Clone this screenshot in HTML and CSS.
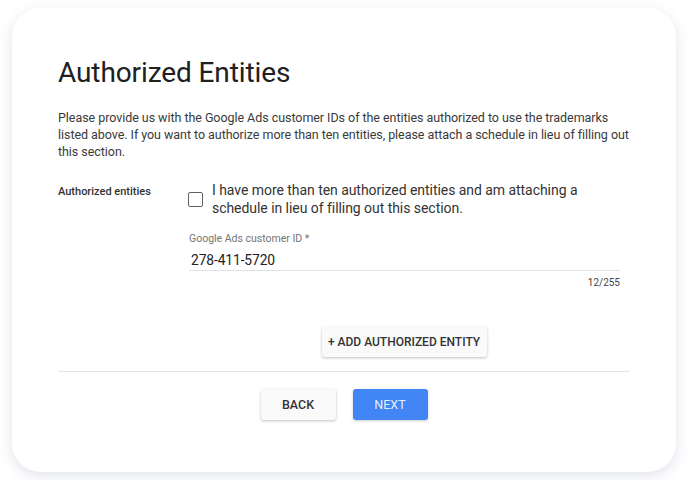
FILE: index.html
```html
<!DOCTYPE html>
<html>
<head>
<meta charset="utf-8">
<link rel="stylesheet" href="styles.css">
</head>
<body>
<div class="card">
  <h1 class="title">Authorized Entities</h1>
  <p class="intro">Please provide us with the Google Ads customer IDs of the entities authorized to use the trademarks listed above. If you want to authorize more than ten entities, please attach a schedule in lieu of filling out this section.</p>
  <div class="row">
    <div class="row-label">Authorized entities</div>
    <div class="row-body">
      <label class="check">
        <span class="box"></span>
        <span class="check-text">I have more than ten authorized entities and am attaching a schedule in lieu of filling out this section.</span>
      </label>
      <div class="field">
        <div class="field-label">Google Ads customer ID *</div>
        <div class="field-value">278-411-5720</div>
        <div class="counter">12/255</div>
      </div>
      <div class="add-wrap">
        <button class="btn add">+ ADD AUTHORIZED ENTITY</button>
      </div>
    </div>
  </div>
  <div class="divider"></div>
  <div class="actions">
    <button class="btn back">BACK</button>
    <button class="btn next">NEXT</button>
  </div>
</div>
</body>
</html>
```

FILE: styles.css
```css
html, body {
  margin: 0;
  padding: 0;
  background: #ffffff;
}
body {
  font-family: Roboto, "Liberation Sans", sans-serif;
  padding: 8px 12px;
}
.card {
  width: 664px;
  height: 464px;
  box-sizing: border-box;
  background: #fff;
  border-radius: 28px;
  box-shadow: 0 4px 14px rgba(70, 80, 140, 0.16);
  padding: 50px 46px 0 46px;
}
.title {
  margin: 0;
  font-size: 28px;
  line-height: 30px;
  font-weight: 400;
  letter-spacing: -0.1px;
  color: #202020;
}
.intro {
  margin: 21px 0 0 0;
  font-size: 12.5px;
  line-height: 17px;
  letter-spacing: -0.05px;
  color: #3a3a3a;
}
.row {
  display: flex;
  margin-top: 21px;
}
.row-label {
  width: 130px;
  padding-top: 2px;
  font-size: 11px;
  font-weight: 500;
  line-height: 18px;
  color: #333;
}
.row-body {
  flex: 1;
  padding-right: 10px;
}
.check {
  display: flex;
  align-items: center;
}
.box {
  width: 13px;
  height: 13px;
  border: 1.6px solid #616161;
  border-radius: 2px;
  flex: none;
  margin-right: 9px;
}
.check-text {
  font-size: 14px;
  line-height: 18px;
  letter-spacing: -0.05px;
  color: #333;
}
.field {
  margin-top: 15px;
  padding-left: 1px;
}
.field-label {
  font-size: 10.5px;
  line-height: 14px;
  color: #757575;
}
.field-value {
  margin-top: 4px;
  font-size: 13.8px;
  line-height: 20px;
  letter-spacing: -0.1px;
  color: #222;
  padding-left: 2px;
  border-bottom: 1px solid #e2e2e2;
}
.counter {
  margin-top: 5px;
  font-size: 10px;
  line-height: 14px;
  text-align: right;
  color: #444;
}
.add-wrap {
  display: flex;
  justify-content: center;
  margin-top: 37px;
}
.btn {
  font-family: Roboto, "Liberation Sans", sans-serif;
  font-weight: 500;
  border: none;
  border-radius: 3px;
  cursor: pointer;
}
.add {
  height: 30px;
  width: 165px;
  background: #fafafa;
  color: #333;
  font-size: 12px;
  padding: 0;
  box-shadow: 0 1px 3px rgba(0, 0, 0, 0.25);
}
.divider {
  margin-top: 14px;
  height: 1px;
  background: #e3e3e3;
}
.actions {
  margin-top: 17px;
  display: flex;
  justify-content: center;
  gap: 17px;
}
.back, .next {
  height: 31px;
  width: 75px;
  font-size: 12.5px;
  padding: 0;
}
.back {
  background: #fafafa;
  color: #333;
  box-shadow: 0 1px 3px rgba(0, 0, 0, 0.25);
}
.next {
  background: #4285f4;
  color: #e8effd;
  font-weight: 400;
  box-shadow: 0 1px 3px rgba(0, 0, 0, 0.2);
}
```
